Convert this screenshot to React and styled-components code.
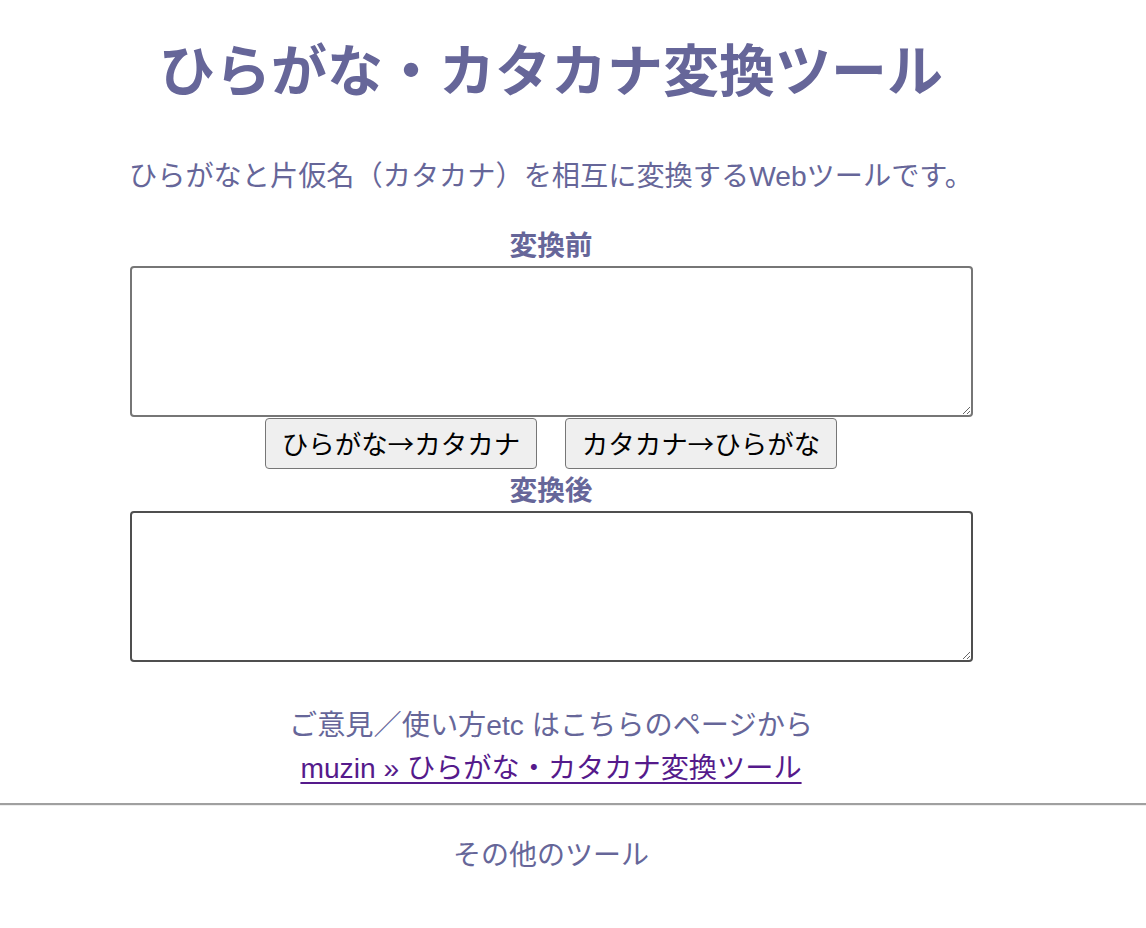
import React from "react";
import styled, { createGlobalStyle } from "styled-components";

const Global = createGlobalStyle`
  html, body { margin: 0; padding: 0; background: #fff; }
  body { font-family: "Liberation Sans", "Noto Sans CJK JP", sans-serif; color: #666699; }
`;

const Main = styled.main`
  width: 1102px;
  text-align: center;
`;

const Title = styled.h1`
  margin: 37px 0 0;
  font-size: 56px;
  line-height: 70px;
  font-weight: 700;
  color: #666699;
`;

const Lead = styled.p`
  margin: ${(p) => p.$top}px 0 0;
  font-size: 28.2px;
  line-height: 40px;
  color: #666699;
`;

const Label = styled.div`
  margin-top: ${(p) => p.$top}px;
  font-size: 27.7px;
  line-height: 34px;
  font-weight: 700;
  color: #666699;
`;

const Area = styled.textarea`
  display: block;
  box-sizing: border-box;
  width: 843px;
  height: 151px;
  margin: 3px auto 0;
  border: 2px solid ${(p) => p.$border};
  border-radius: 4px;
  background: #fff;
  font-size: 20px;
  font-family: inherit;
  resize: both;
`;

const ButtonRow = styled.div`
  display: flex;
  justify-content: center;
  gap: 28px;
  margin-top: 1px;
`;

const Button = styled.button`
  box-sizing: border-box;
  width: 272px;
  height: 51px;
  padding: 0;
  border: 1.5px solid #767676;
  border-radius: 4px;
  background: #efefef;
  color: #000;
  font-family: "Noto Sans CJK JP", sans-serif;
  font-size: 26.5px;
  line-height: 1;
`;

const Link = styled.a`
  color: #551a8b;
  text-decoration: underline;
  text-underline-offset: 4px;
  text-decoration-thickness: 2px;
`;

const Rule = styled.hr`
  margin: 15px 0 0;
  height: 0;
  border: 0;
  border-top: 2px solid #a0a0a0;
  border-bottom: 1px solid #eeeeee;
`;

const Other = styled.p`
  width: 1102px;
  margin: 30px 0 0;
  text-align: center;
  font-size: 28px;
  line-height: 40px;
  color: #666699;
`;

export default function App() {
  return (
    <>
      <Global />
      <Main>
        <Title>ひらがな・カタカナ変換ツール</Title>
        <Lead $top={49}>ひらがなと片仮名（カタカナ）を相互に変換するWebツールです。</Lead>
        <Label $top={33}>変換前</Label>
        <Area $border="#767676" />
        <ButtonRow>
          <Button>ひらがな→カタカナ</Button>
          <Button>カタカナ→ひらがな</Button>
        </ButtonRow>
        <Label $top={5}>変換後</Label>
        <Area $border="#4f4f4f" />
        <Lead $top={43}>ご意見／使い方etc はこちらのページから</Lead>
        <Lead $top={3}>
          <Link href="#">muzin » ひらがな・カタカナ変換ツール</Link>
        </Lead>
      </Main>
      <Rule />
      <Other>その他のツール</Other>
    </>
  );
}
